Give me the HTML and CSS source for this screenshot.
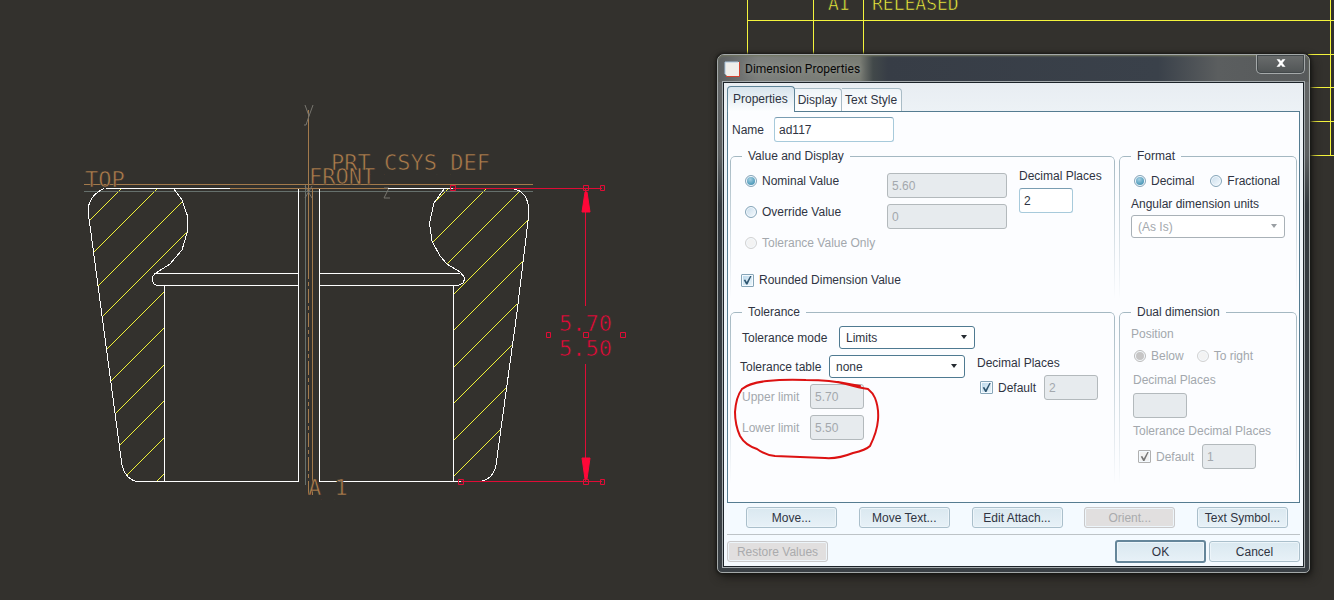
FILE: index.html
```html
<!DOCTYPE html>
<html lang="en">
<head>
<meta charset="utf-8">
<title>Dimension Properties</title>
<link rel="stylesheet" href="styles.css">
</head>
<body>
<main class="workspace">
  <svg class="drawing" aria-label="Section drawing">
    <defs>
      <clipPath id="cut-left"><path d="M104 189Q88 196 88 212L122 465Q125 479 137 481H164V286H158Q152 284 152 279Q152 275 155 273C166 267 182 258 187 231V214Q185 202 174 189Z"/></clipPath>
      <clipPath id="cut-right"><path d="M444 189Q430 206 430 223C430 243 438 261 460 272Q470 280 458 286H453V481H479Q494 478 496 465L529 214Q529 190 512 189Z"/></clipPath>
    </defs>
    <g class="table-lines">
      <line x1="747" y1="20.5" x2="100%" y2="20.5"/>
      <line x1="1308" y1="54.5" x2="100%" y2="54.5"/>
      <line x1="1308" y1="87.5" x2="100%" y2="87.5"/>
      <line x1="1308" y1="121.5" x2="100%" y2="121.5"/>
      <line x1="1308" y1="155.5" x2="100%" y2="155.5"/>
      <path d="M747.5 0V56M813.5 0V56M863.5 0V56M1330.5 0V155"/>
    </g>
    <text class="cad small yellow" x="828" y="10">A1</text>
    <text class="cad small yellow" x="872" y="10">RELEASED</text>

    <g class="hatch" clip-path="url(#cut-left)">
      <path d="M10 300L210 100M46 300L246 100M84 300L284 100M19 400L219 200M56 400L256 200M92 400L292 200M29 500L229 300M65 500L265 300M102 500L302 300M138 500L338 300"/>
    </g>
    <g class="hatch" clip-path="url(#cut-right)">
      <path d="M337 300L537 100M375 300L575 100M411 300L611 100M348 400L548 200M384 400L584 200M421 400L621 200M357 500L557 300M394 500L594 300M430 500L630 300"/>
    </g>
    <path class="datum-grey" d="M84 191.5H533M305.500 185V485"/>
    <path class="datum" d="M84 184.5H533M230 188.5H388M308.500 110V265M312.500 188V495"/>
    <path class="datum" stroke-dasharray="14 3 4 3" d="M308.500 265V495"/>
    <path class="axis-mark" d="M305 105L309 116M313 105L309 116L306 125L304 125M305 186L312 198M312 186L305 198M384 188H389L384 198H390"/>
    <g class="outline">
      <path d="M106 188.500H230M104 188.500Q88 196 88 212L89.500 222L121.500 462Q124 478 136 481.500H298.500V188.500M174 189L182 200L187.500 216V231L182 250L170 264L155 273.500H298.500M155 273.500Q152 276 152.500 280Q153 285 158 285.500H298.500M164.500 285.500V481.500"/>
      <path d="M388 188.500H453M319.500 188.500V481.500H461M319.500 273.500H460M319.500 285.500H459M453.500 285.500V481.500M444 189L434 203L429.500 223L432 241L440 256L447 264L460 272L465 278L463 283L458 285.500M512 188.500Q529 191 529 213L517 312L496 465Q493 480 479 481.500"/>
    </g>
    <text class="cad brown" x="85" y="187">TOP</text>
    <text class="cad brown" x="309" y="184">FRONT</text>
    <text class="cad brown" x="331" y="170">PRT_CSYS_DEF</text>
    <text class="cad brown" x="308" y="495">A_1</text>

    <g class="dimension">
      <path d="M453 188.500H602M461 481.500H602M585.500 189V306M585.500 364V481"/>
      <path class="arrow" d="M585 192L582 212H590L587 192ZM585 479L582 458H590L587 479Z"/>
      <path d="M450.500 185.500h5v5h-5zM583.500 185.500h5v5h-5zM600.500 185.500h4v5h-4zM458.500 479.500h5v5h-5zM583.500 479.500h5v5h-5zM600.500 479.500h4v5h-4zM546.500 332.500h4v5h-4zM583.500 332.500h5v5h-5zM620.500 332.500h5v5h-5z"/>
    </g>
    <text class="cad red" x="559" y="331">5.70</text>
    <text class="cad red" x="559" y="356">5.50</text>
  </svg>

  <section class="dialog" role="dialog" aria-labelledby="dialog-title">
    <header class="titlebar">
      <svg class="app-icon" width="16" height="16" viewBox="0 0 16 16" aria-hidden="true"><path fill="#f0eeea" d="M1 1H15V15H3L1 13Z"/><path fill="none" stroke="#a9c3dc" d="M1 13V1H14"/><path fill="none" stroke="#d4422f" d="M15.500 1V15.500H2"/></svg>
      <h1 class="title" id="dialog-title">Dimension Properties</h1>
      <button class="close" type="button" aria-label="Close"><svg width="10" height="8" viewBox="0 0 11 9" aria-hidden="true"><path fill="#fff" stroke="#34383b" stroke-width=".4" d="M0 0H4L5.500 2L7 0H11L7.500 4.500L11 9H7L5.500 7L4 9H0L3.500 4.500Z"/></svg></button>
    </header>
    <form class="client">
      <nav class="tabs" role="tablist">
        <button class="tab active" type="button" role="tab" aria-selected="true">Properties</button>
        <button class="tab" type="button" role="tab" aria-selected="false">Display</button>
        <button class="tab" type="button" role="tab" aria-selected="false">Text Style</button>
      </nav>
      <div class="panel">
        <div class="name-row">
          <label for="name">Name</label>
          <input class="field wide" id="name" type="text" value="ad117">
        </div>
        <div class="groups">
          <fieldset class="group">
            <legend>Value and Display</legend>
            <div class="value-body">
              <div class="choices">
                <label class="choice"><input type="radio" name="value" checked>Nominal Value</label>
                <label class="choice"><input type="radio" name="value">Override Value</label>
                <label class="choice off"><input type="radio" name="value" disabled>Tolerance Value Only</label>
                <label class="choice rounded"><input type="checkbox" checked>Rounded Dimension Value</label>
              </div>
              <div class="values">
                <input class="field wide" type="text" value="5.60" aria-label="Nominal value" disabled>
                <input class="field wide" type="text" value="0" aria-label="Override value" disabled>
              </div>
              <div class="places">
                <label for="places">Decimal Places</label>
                <input class="field" id="places" type="text" value="2">
              </div>
            </div>
          </fieldset>
          <fieldset class="group">
            <legend>Format</legend>
            <div class="format-body">
              <div class="radio-row">
                <label class="choice"><input type="radio" name="format" checked>Decimal</label>
                <label class="choice"><input type="radio" name="format">Fractional</label>
              </div>
              <label for="units">Angular dimension units</label>
              <span class="select off"><select id="units" disabled><option>(As Is)</option></select></span>
            </div>
          </fieldset>
          <fieldset class="group">
            <legend>Tolerance</legend>
            <div class="tolerance-body">
              <div class="modes">
                <div class="line indent mode"><label for="mode">Tolerance mode</label><span class="select"><select id="mode"><option>Limits</option></select></span></div>
                <div class="line table"><label for="table">Tolerance table</label><span class="select"><select id="table"><option>none</option></select></span></div>
                <div class="line indent off"><label for="upper">Upper limit</label><input class="field" id="upper" type="text" value="5.70" disabled></div>
                <div class="line indent off"><label for="lower">Lower limit</label><input class="field" id="lower" type="text" value="5.50" disabled></div>
              </div>
              <div class="tolerance-places">
                <span>Decimal Places</span>
                <div class="default-row">
                  <label class="choice"><input type="checkbox" checked>Default</label>
                  <input class="field" type="text" value="2" aria-label="Tolerance decimal places" disabled>
                </div>
              </div>
            </div>
            <svg class="markup" width="152" height="84" viewBox="730 378 152 84" aria-hidden="true"><path d="M742 389Q749 383 767 381T806 380Q832 380 846 384T868 389Q873 393 875 398Q879 408 878 420T870 446Q866 450 853 453Q838 459 825 458L775 456Q765 455 757 449Q745 445 740 436Q735 425 735 412Q736 397 742 389M838 382L860 386"/></svg>
          </fieldset>
          <fieldset class="group">
            <legend>Dual dimension</legend>
            <div class="dual-body off">
              <span class="position">Position</span>
              <div class="radio-row tight">
                <label class="choice"><input type="radio" name="position" checked disabled>Below</label>
                <label class="choice"><input type="radio" name="position" disabled>To right</label>
              </div>
              <div class="dual-places">
                <label for="dual-places">Decimal Places</label>
                <input class="field" id="dual-places" type="text" disabled>
                <span>Tolerance Decimal Places</span>
                <div class="default-row">
                  <label class="choice"><input type="checkbox" checked disabled>Default</label>
                  <input class="field" type="text" value="1" aria-label="Dual tolerance decimal places" disabled>
                </div>
              </div>
            </div>
          </fieldset>
        </div>
      </div>
      <div class="actions">
        <button class="btn" type="button">Move...</button>
        <button class="btn" type="button">Move Text...</button>
        <button class="btn" type="button">Edit Attach...</button>
        <button class="btn" type="button" disabled>Orient...</button>
        <button class="btn" type="button">Text Symbol...</button>
      </div>
      <footer class="footer">
        <button class="btn restore" type="button" disabled>Restore Values</button>
        <button class="btn primary" type="button">OK</button>
        <button class="btn" type="button">Cancel</button>
      </footer>
    </form>
  </section>
</main>
</body>
</html>
```

FILE: styles.css
```css
* { box-sizing: border-box; }

body {
  margin: 0;
  background: #33312d;
  color: #2f3442;
  font: 12px/14px "Liberation Sans", Arial, sans-serif;
}

button, input, select { font: inherit; color: inherit; margin: 0; }

.workspace { position: relative; min-height: 100vh; overflow: hidden; }

/* CAD drawing */
.drawing { position: absolute; inset: 0; width: 100%; height: 100%; fill: none; }
.hatch path, .outline path { shape-rendering: crispEdges; }
.table-lines { stroke: #f4f43c; }
.hatch { stroke: #f0f238; }
.outline { stroke: #fff; }
.datum { stroke: #a37a4c; }
.datum-grey { stroke: #66706c; }
.axis-mark { stroke: #77756e; }
.dimension { stroke: #e00c36; }
.arrow { fill: #ff0738; stroke: #ff0738; }
.cad { font: 22px "DejaVu Sans Mono", monospace; stroke: #33312d; stroke-width: .6px; }
.cad.small { font-size: 18px; }
.yellow { fill: #f4f43c; }
.brown { fill: #ae7d4c; }
.red { fill: #e80a38; }

/* Window frame */
.dialog {
  position: absolute;
  top: 54px;
  left: 717px;
  right: 24px;
  padding: 0 5px 5px;
  border: 1px solid #a3a8a8;
  border-radius: 7px 7px 5px 5px;
  background: linear-gradient(180deg, #66696a 0, #5d6061 100px, #343a3f 150px, #3a4045 100%);
  box-shadow: 0 0 3px 1px #161614, 2px 4px 10px #1b1a17;
}
.titlebar {
  display: flex;
  align-items: center;
  gap: 5px;
  height: 27px;
  margin: 0 -5px;
  padding: 0 4px 0 6px;
  border-radius: 6px 6px 0 0;
  background: linear-gradient(90deg, #5b5e60 0, #7d807d 40px, #797c74 142px, #42494a 155px, #373d46 170px, #3a414a 440px, #5b5e5f 500px, #575a5b 100%);
  box-shadow: inset 0 1px 2px #73765f;
}
.title {
  margin: 0;
  color: #080808;
  font: 12px/16px Roboto, "Open Sans", sans-serif;
  text-shadow: 0 0 6px #a5a69f;
}
.close {
  align-self: flex-start;
  display: flex;
  align-items: center;
  justify-content: center;
  width: 49px;
  height: 19px;
  margin-left: auto;
  padding: 0 0 2px;
  border: 1px solid #a5a9aa;
  border-top: 0;
  border-radius: 0 0 5px 5px;
  background: linear-gradient(#6a6d6d, #505455);
  box-shadow: inset 0 0 0 1px #42484a;
}
.client {
  padding: 3px 3px 3px;
  border: 1px solid #1c2329;
  background: linear-gradient(#e8edf2 0, #edf2f6 30px, #f4faff 420px);
  box-shadow: 0 0 0 1px #a4aaad;
}

/* Tabs */
.tabs { display: flex; align-items: flex-end; }
.tab {
  height: 23px;
  margin-bottom: 0;
  padding: 0 4px 0 3px;
  border: 1px solid #a9bcc6;
  border-left: 0;
  border-bottom: 0;
  border-radius: 0 4px 0 0;
  background: linear-gradient(#eff4f8, #fff);
  white-space: nowrap;
}
.tab.active {
  position: relative;
  height: 26px;
  margin-bottom: -1px;
  padding: 0 6px 2px 5px;
  border: 1px solid #5e8498;
  border-bottom: 0;
  border-radius: 4px 4px 0 0;
  background: linear-gradient(#d7e4ed, #fdfeff);
}
.panel {
  padding: 5px 2px 12px;
  border: 1px solid #557c91;
  background: #fcfdff;
}
.name-row { display: flex; align-items: center; gap: 10px; padding-left: 2px; }

/* Groups */
.groups {
  display: grid;
  grid-template-columns: minmax(0, 385fr) minmax(0, 178fr);
  grid-template-rows: minmax(156px, auto) minmax(185px, auto);
  column-gap: 4px;
  padding-top: 7px;
}
.group { position: relative; min-width: 0; margin: 0; padding: 0; border: 0; }
.group::before {
  content: "";
  position: absolute;
  inset: 7px 0 6px;
  border: 1px solid #a4b8c2;
  border-bottom: 0;
  border-radius: 5px 5px 0 0;
  mask-image: linear-gradient(#000, transparent);
  pointer-events: none;
}
.group legend {
  position: relative;
  float: left;
  margin-left: 12px;
  padding: 0 6px;
  background: #fcfdff;
}
.group > div { clear: both; position: relative; }

.value-body { display: flex; padding: 6px 0 0 11px; }
.choices { display: flex; flex-direction: column; gap: 7px; flex: 0 0 146px; min-width: 0; padding-left: 4px; }
.choice { display: flex; align-items: center; gap: 5px; white-space: nowrap; }
.choices .choice { min-height: 24px; }
.choices .rounded { margin: 6px 0 0 -4px; }
.values { display: flex; flex-direction: column; gap: 6px; padding-top: 4px; }
.places { display: flex; flex-direction: column; gap: 5px; padding-left: 12px; white-space: nowrap; }

.format-body { display: flex; flex-direction: column; padding: 11px 12px 0; }
.format-body > label { margin: 9px 0 4px; }
.radio-row { display: flex; gap: 16px; padding-left: 3px; }
.tight { gap: 13px; }

.tolerance-body { display: flex; padding: 7px 0 0 10px; }
.modes { display: flex; flex-direction: column; gap: 6px; flex: 0 0 237px; }
.line { display: flex; align-items: center; gap: 6px; }
.mode label { width: 91px; }
.table label { width: 83px; }
.indent { padding-left: 2px; }
.line.off label { width: 62px; }
.tolerance-places { display: flex; flex-direction: column; gap: 5px; padding-top: 30px; }
.default-row { display: flex; align-items: center; gap: 8px; padding-left: 3px; }

.dual-body { display: flex; flex-direction: column; padding: 8px 0 0 12px; }
.position { margin-bottom: 8px; }
.dual-places { display: flex; flex-direction: column; align-items: flex-start; gap: 6px; padding: 10px 0 0 2px; }
.dual-places .default-row { padding-left: 5px; }

.off { color: #a3a8ad; }

/* Controls */
.field {
  width: 54px;
  height: 25px;
  padding: 0 4px;
  border: 1px solid #a7cadb;
  border-top-color: #799db2;
  border-radius: 3px;
  background: #fff;
}
.field.wide { width: 120px; }
.field:disabled { border-color: #b3b9bc; background: #e7ebee; color: #a3a8ad; }

input[type="radio"], input[type="checkbox"] {
  appearance: none;
  flex: none;
  display: grid;
  place-items: center;
  width: 12px;
  height: 12px;
  border: 1px solid #86a5b8;
  border-radius: 50%;
  background: linear-gradient(135deg, #c8dceb, #f6fbfe);
  box-shadow: inset 0 0 0 1px #f4faff;
}
input[type="radio"]:checked::before {
  content: "";
  width: 8px;
  height: 8px;
  border-radius: 50%;
  background: radial-gradient(circle at 40% 30%, #a6cfe2, #5ca3c0 60%, #4488a8);
}
input[type="radio"]:disabled { border-color: #d2d2d2; background: #f3f3f3; }
input[type="radio"]:checked:disabled { border-color: #bcbcbc; }
input[type="radio"]:checked:disabled::before { background: #c6c5c5; }
input[type="checkbox"] {
  width: 13px;
  height: 13px;
  border-radius: 1px;
  background: linear-gradient(135deg, #b9d7ea, #eef7fc);
}
input[type="checkbox"]:checked::before {
  content: "";
  width: 9px;
  height: 9px;
  background: #2f5671;
  clip-path: polygon(8% 50%, 25% 45%, 42% 72%, 82% 0, 97% 0, 50% 100%, 35% 100%);
}
input[type="checkbox"]:disabled { border-color: #b0b0b0; background: #f2f2f2; }
input[type="checkbox"]:checked:disabled::before { background: #777; }

.select { position: relative; display: flex; width: 136px; }
.format-body .select { width: 100%; }
.select select {
  appearance: none;
  width: 100%;
  height: 23px;
  padding: 0 20px 0 6px;
  border: 1px solid #4f7a91;
  border-radius: 3px;
  background: #fff;
}
.select.off select { border-color: #a9b1b7; opacity: 1; }
.select::after {
  content: "";
  position: absolute;
  top: 9px;
  right: 8px;
  border: 3px solid transparent;
  border-top: 4px solid #252b31;
  border-bottom: 0;
  pointer-events: none;
}
.select.off::after { border-top-color: #9a9fa3; }

.markup { position: absolute; top: 73px; left: 0; fill: none; stroke: #dc1212; stroke-width: 2px; stroke-linecap: round; pointer-events: none; }

/* Buttons */
.btn {
  width: 91px;
  height: 21px;
  padding: 0;
  border: 1px solid #aabfcb;
  border-radius: 3px;
  background: linear-gradient(#dae8f0, #e7f1f7);
  box-shadow: inset 0 0 0 1px #edf5fa;
}
.btn:disabled { border-color: #c9c9cb; background: #e1dfdf; color: #aaabad; }
.actions { display: flex; justify-content: space-between; padding: 4px 12px 6px 19px; }
.footer {
  display: flex;
  align-items: center;
  gap: 3px;
  padding-top: 5px;
  border-top: 1px solid #bdc3c7;
}
.restore { width: 101px; margin-right: auto; }
.primary { height: 23px; border: 2px solid #65869a; }
```
